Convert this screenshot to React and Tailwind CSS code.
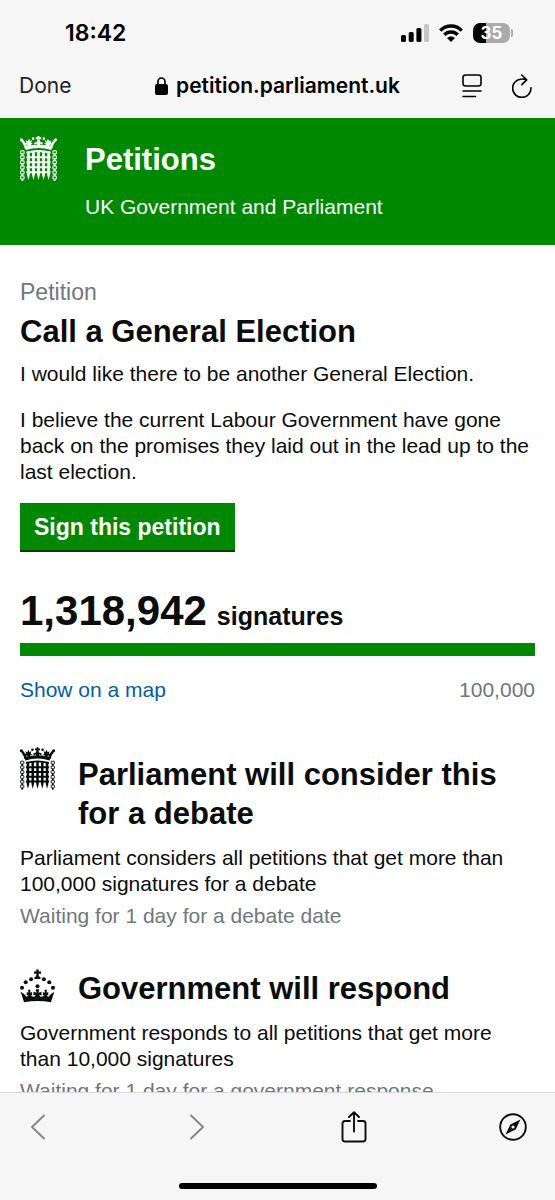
import React from "react";

const BAR_X = [25, 40, 55, 70, 85];
const LINK_Y = [44, 59, 74, 89, 104, 119];

function Portcullis({ className }) {
  return (
    <svg viewBox="0 0 110 134" className={className} fill="none" stroke="currentColor" aria-hidden="true">
      <g fill="currentColor" stroke="none">
        <path d="M14 33Q55 18 96 33L93 42Q55 29 17 42Z" />
        <path d="M14 37C12 28 7 20 1 13L7 9C13 15 18 23 22 33ZM96 37C98 28 103 20 109 13L103 9C97 15 92 23 88 33Z" />
        <path d="M24 32L20 25L14 25L19 19L17 13L23 16L27 8L30 15L36 13L33 20L38 24L32 25L33 30ZM86 32L90 25L96 25L91 19L93 13L87 16L83 8L80 15L74 13L77 20L72 24L78 25L77 30Z" />
        <path d="M51 30L50 22L43 26L42 20L50 17L52 10H47V4H52V0H58V4H63V10H58L60 17L68 20L67 26L60 22L59 30Z" />
        <circle cx="4" cy="11" r="4.5" />
        <circle cx="106" cy="11" r="4.5" />
        <circle cx="39" cy="8" r="4" />
        <circle cx="71" cy="8" r="4" />
        {BAR_X.map((x) => (
          <path key={x} d={`M${x - 4} 46H${x + 4}V116L${x} 131L${x - 4} 116Z`} />
        ))}
      </g>
      <path d="M19 50Q55 39 91 50" strokeWidth="6" />
      <path d="M19 63H91M19 78H91M19 93H91M19 108H91" strokeWidth="6" />
      {LINK_Y.map((y) => (
        <g key={y} strokeWidth="3">
          <rect x="2" y={y} width="10" height="9" rx="2" />
          <rect x="98" y={y} width="10" height="9" rx="2" />
          <path d={`M7 ${y + 9}v6M103 ${y + 9}v6`} strokeWidth="5" />
        </g>
      ))}
    </svg>
  );
}

function Crown({ className }) {
  return (
    <svg viewBox="0 0 104 100" className={className} fill="currentColor" aria-hidden="true">
      <path d="M48 1h8l-1 6 7-1v8l-7-1 1 8 5 3v5H43v-5l5-3 1-8-7 1V6l7 1Z" />
      <circle cx="52" cy="51" r="6" />
      <circle cx="33" cy="30" r="6" />
      <circle cx="17" cy="39" r="6" />
      <circle cx="6" cy="55" r="6" />
      <circle cx="71" cy="30" r="6" />
      <circle cx="87" cy="39" r="6" />
      <circle cx="98" cy="55" r="6" />
      <path d="M2 67L12 74L19 82Q24 82 25 77L20 78V68L25 70L24 61H31L30 70L36 68V78L31 77Q36 84 44 81L47 76L40 78V67L49 70L47 60H57L55 70L64 67V78L57 76L60 81Q68 84 73 77L68 78V68L74 70L73 61H80L79 70L84 68V78L79 77Q80 82 85 82L92 74L102 67L92 98Q52 91 12 98Z" />
    </svg>
  );
}

function StatusBar() {
  return (
    <div className="flex h-14 items-center justify-between pt-2.5 pr-[42px] pl-[65px]">
      <time className="font-['Inter',sans-serif] text-[23px] leading-6 font-semibold">18:42</time>
      <div className="flex items-center gap-2.5">
        <svg viewBox="0 0 28 18" className="h-[18px] w-7" fill="currentColor" role="img" aria-label="Mobile signal">
          <rect x="0" y="11" width="5" height="7" rx="1.500" />
          <rect x="7.700" y="8" width="5" height="10" rx="1.500" />
          <rect x="15.400" y="4" width="5" height="14" rx="1.500" />
          <rect x="23" y="0" width="5" height="18" rx="1.500" fill="#c6c6c6" />
        </svg>
        <svg viewBox="0 0 24 18" className="h-[18px] w-6" fill="none" stroke="currentColor" strokeWidth="3.400" role="img" aria-label="Wi-Fi">
          <path d="M1.300 6.600C7 .500 17 .500 22.700 6.600M5.300 10.800C9 7 15 7 18.700 10.800" />
          <path d="M12 18L8 14.100C10 11.800 14 11.800 16 14.100Z" fill="currentColor" stroke="none" />
        </svg>
        <div className="flex items-center gap-px">
          <div className="flex h-5 w-[37px] items-center justify-center rounded-[7px] bg-linear-to-r from-black from-35% to-[#aaaaaa] to-35% font-['Inter',sans-serif] text-[17px] leading-5 font-bold text-white">
            35
          </div>
          <div className="h-2 w-0.5 rounded-r-full bg-[#aaaaaa]" />
        </div>
      </div>
    </div>
  );
}

function AddressBar() {
  return (
    <div className="flex h-[62px] items-center justify-between px-[19px] pb-0.5">
      <button type="button" className="w-28 text-left font-['Inter',sans-serif] text-[21px] leading-7 text-[#222]">Done</button>
      <div className="flex items-center gap-2">
        <svg viewBox="0 0 13 18" className="h-[18px] w-[13px]" aria-hidden="true">
          <rect x="0" y="7" width="13" height="11" rx="2" fill="currentColor" />
          <path d="M3 8V4.800a3.500 3.800 0 0 1 7 0V8" fill="none" stroke="currentColor" strokeWidth="1.700" />
        </svg>
        <span className="font-['Inter',sans-serif] text-[21px] leading-7 font-semibold">petition.parliament.uk</span>
      </div>
      <div className="flex w-28 items-center justify-end gap-[30px] pr-1">
        <button type="button" aria-label="Page settings">
          <svg viewBox="0 0 20 24" className="h-6 w-5" fill="none" stroke="currentColor" strokeWidth="1.600" strokeLinecap="round">
            <rect x="1" y="1" width="18" height="11" rx="2.500" />
            <path d="M1 17H19M1 22.500H13.500" />
          </svg>
        </button>
        <button type="button" aria-label="Reload">
          <svg viewBox="0 0 20 24" className="h-6 w-5" fill="none" stroke="currentColor" strokeWidth="1.600" strokeLinecap="round" strokeLinejoin="round">
            <path d="M19 13.800A9.200 9.200 0 1 1 9.800 5Q12.500 4.900 14.500 5.800M9.800 1L14.700 5.900L9.800 10.600" />
          </svg>
        </button>
      </div>
    </div>
  );
}

function Toolbar() {
  return (
    <footer className="shrink-0 border-t border-[#d8dadb] bg-[#f6f6f6]">
      <nav className="grid grid-cols-[20px_24px_32px_28px] items-center justify-between px-7 pt-[18px]" aria-label="Browser">
        <button type="button" aria-label="Back" className="flex justify-center text-[#858585]">
          <svg viewBox="0 0 14 26" className="h-[26px] w-3.5" fill="none" stroke="currentColor" strokeWidth="1.900" strokeLinecap="round" strokeLinejoin="round">
            <path d="M13 1.500L1 13L13 24.500" />
          </svg>
        </button>
        <button type="button" aria-label="Forward" className="flex justify-end text-[#858585]">
          <svg viewBox="0 0 14 26" className="h-[26px] w-3.5" fill="none" stroke="currentColor" strokeWidth="1.900" strokeLinecap="round" strokeLinejoin="round">
            <path d="M1 1.500L13 13L1 24.500" />
          </svg>
        </button>
        <button type="button" aria-label="Share" className="flex justify-end">
          <svg viewBox="0 0 26 32" className="h-8 w-[26px]" fill="none" stroke="currentColor" strokeWidth="1.900" strokeLinecap="round" strokeLinejoin="round">
            <path d="M9 10H4Q1.500 10 1.500 12.500V28Q1.500 30.500 4 30.500H22Q24.500 30.500 24.500 28V12.500Q24.500 10 22 10H17M13 20.500V1.500M8 6L13 1.200L18 6" />
          </svg>
        </button>
        <button type="button" aria-label="Open in browser">
          <svg viewBox="0 0 28 28" className="size-7">
            <circle cx="14" cy="14" r="12.800" fill="none" stroke="currentColor" strokeWidth="1.900" />
            <path fillRule="evenodd" fill="currentColor" d="M21.500 6.500L16.600 16.600L6.500 21.500L11.400 11.400ZM14 12.400A1.600 1.600 0 1 0 14 15.600A1.600 1.600 0 1 0 14 12.400Z" />
          </svg>
        </button>
      </nav>
      <div className="mx-auto mt-10 mb-[11px] h-1.5 w-[198px] rounded-full bg-black" />
    </footer>
  );
}

export default function App() {
  return (
    <div className="flex h-screen flex-col bg-white font-['Liberation_Sans',Arial,sans-serif] text-[21px] leading-[26px] text-[#0b0c0c]">
      <div className="shrink-0 bg-[#f6f6f6] text-black">
        <StatusBar />
        <AddressBar />
      </div>
      <div className="min-h-0 flex-1 overflow-y-auto [scrollbar-width:none]">
        <header className="flex gap-7 bg-[#008800] px-5 pt-[18px] pb-[25px] text-white">
          <Portcullis className="h-[45px] w-[37px] shrink-0" />
          <div>
            <a href="#petitions" className="block pt-[5px] text-[31px] leading-[38px] font-bold">Petitions</a>
            <p className="pt-[15px]">UK Government and Parliament</p>
          </div>
        </header>
        <main className="px-5 pt-[34px]">
          <p className="text-[23px] leading-[26px] text-[#6f777b]">Petition</p>
          <h1 className="mt-2 text-[31px] leading-[38px] font-bold">Call a General Election</h1>
          <p className="mt-2.5">I would like there to be another General Election.</p>
          <p className="mt-5">
            I believe the current Labour Government have gone back on the promises they laid out in the lead up to the last election.
          </p>
          <button type="button" className="mt-[18px] block border-b-2 border-[#003d00] bg-[#008800] px-3.5 pt-[11px] pb-2.5 text-[23px] leading-[26px] font-bold text-white">
            Sign this petition
          </button>
          <p className="mt-[33px] font-bold">
            <data value="1318942" className="text-[42px] leading-[52px]">1,318,942</data>
            <span className="ml-2.5 text-[25px]">signatures</span>
          </p>
          <div className="mt-1.5 h-[13px] bg-[#008800]" role="progressbar" aria-label="Signatures" aria-valuemin="0" aria-valuemax="100000" aria-valuenow="100000" />
          <div className="mt-[21px] flex justify-between">
            <a href="#map" className="text-[#005ea5]">Show on a map</a>
            <span className="text-[#6f777b]">100,000</span>
          </div>
          <section className="mt-11">
            <div className="flex gap-[23px]">
              <Portcullis className="h-[43px] w-[35px] shrink-0" />
              <h2 className="pt-2 text-[31px] leading-[39px] font-bold">Parliament will consider this for a debate</h2>
            </div>
            <p className="mt-3">Parliament considers all petitions that get more than 100,000 signatures for a debate</p>
            <p className="mt-1.5 text-[#6f777b]">Waiting for 1 day for a debate date</p>
          </section>
          <section className="mt-10">
            <div className="flex gap-[23px]">
              <Crown className="h-[34px] w-[35px] shrink-0" />
              <h2 className="text-[31px] leading-[39px] font-bold">Government will respond</h2>
            </div>
            <p className="mt-3">Government responds to all petitions that get more than 10,000 signatures</p>
            <p className="mt-1.5 text-[#6f777b]">Waiting for 1 day for a government response</p>
          </section>
        </main>
      </div>
      <Toolbar />
    </div>
  );
}
